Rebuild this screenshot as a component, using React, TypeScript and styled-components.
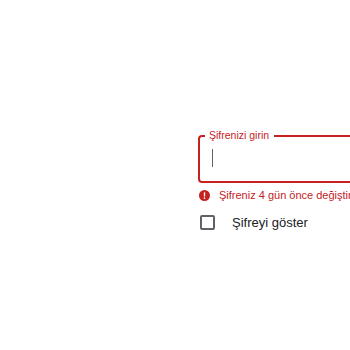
import * as React from 'react';
import styled, { createGlobalStyle } from 'styled-components';

const GlobalStyle = createGlobalStyle`
  html, body {
    margin: 0;
    padding: 0;
    background: #ffffff;
    overflow: hidden;
  }
  body {
    font-family: "Liberation Sans", Arial, Helvetica, sans-serif;
  }
`;

const Page = styled.div`
  width: 350px;
  height: 350px;
  padding: 129px 0 0 198px;
  box-sizing: border-box;
  overflow: hidden;
`;

const Form = styled.div`
  width: 220px;
  display: flex;
  flex-direction: column;
`;

const Field = styled.fieldset`
  margin: 0;
  padding: 7px 0 0 12px;
  height: 54px;
  box-sizing: border-box;
  border: 2px solid #c5221f;
  border-radius: 4px;
`;

const Legend = styled.legend`
  margin-left: -7px;
  padding: 0 5px 0 4px;
  font-size: 10.5px;
  line-height: 13px;
  color: #c5221f;
`;

const Caret = styled.span`
  display: block;
  width: 1px;
  height: 18px;
  background: #5f6368;
`;

const Helper = styled.div`
  display: flex;
  align-items: center;
  gap: 9px;
  margin-top: 6px;
  padding-left: 1px;
  font-size: 11px;
  line-height: 13px;
  color: #c5221f;
  white-space: nowrap;
`;

const Toggle = styled.label`
  display: flex;
  align-items: center;
  margin-top: 13px;
  padding-left: 2px;
  font-size: 13px;
  color: #202124;
`;

const Box = styled.span`
  width: 15px;
  height: 15px;
  box-sizing: border-box;
  border: 2px solid #5f6368;
  border-radius: 2px;
  margin-right: 17px;
`;

export default function App() {
  return (
    <>
      <GlobalStyle />
      <Page>
        <Form>
          <Field>
            <Legend>Şifrenizi girin</Legend>
            <Caret />
          </Field>
          <Helper>
            <svg width="11" height="11" viewBox="0 0 24 24">
              <circle cx="12" cy="12" r="12" fill="#c5221f" />
              <rect x="10.5" y="5" width="3" height="9" rx="1" fill="#fff" />
              <circle cx="12" cy="17.8" r="1.8" fill="#fff" />
            </svg>
            <span>Şifreniz 4 gün önce değiştirildi</span>
          </Helper>
          <Toggle>
            <Box />
            Şifreyi göster
          </Toggle>
        </Form>
      </Page>
    </>
  );
}
